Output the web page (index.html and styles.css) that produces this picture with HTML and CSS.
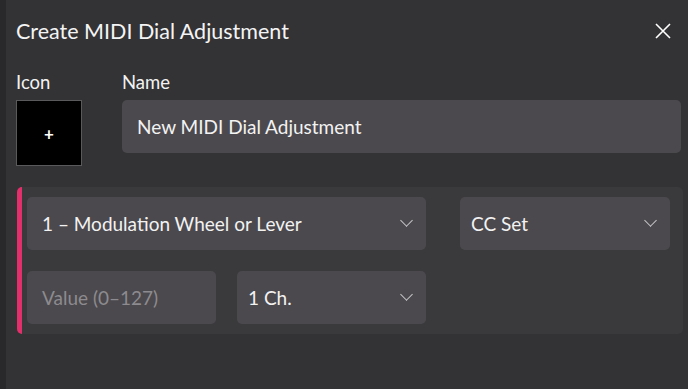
FILE: index.html
```html
<!DOCTYPE html>
<html lang="en">
<head>
    <meta charset="UTF-8">
    <title>Create MIDI Dial Adjustment</title>
    <link rel="stylesheet" href="styles.css">
</head>
<body>
    <div class="dialog">
        <div class="header">
            <h2>Create MIDI Dial Adjustment</h2>
            <button class="close" aria-label="Close">
                <svg width="16" height="16" viewBox="0 0 16 16"><path d="M1 1L15 15M15 1L1 15" stroke="#fff" stroke-width="1.6" fill="none"/></svg>
            </button>
        </div>

        <div class="top-row">
            <div class="field icon-field">
                <label>Icon</label>
                <div class="icon-box">+</div>
            </div>
            <div class="field name-field">
                <label>Name</label>
                <div class="input">New MIDI Dial Adjustment</div>
            </div>
        </div>

        <div class="panel">
            <div class="row">
                <div class="select wide">1 – Modulation Wheel or Lever<span class="chev"></span></div>
                <div class="select type tight">CC Set<span class="chev"></span></div>
            </div>
            <div class="row">
                <div class="input small placeholder">Value (0–127)</div>
                <div class="select small tight">1 Ch.<span class="chev"></span></div>
            </div>
        </div>
    </div>
</body>
</html>
```

FILE: styles.css
```css
body {
    margin: 0;
    background-color: #333235;
    font-family: Lato, 'Noto Sans', sans-serif;
    color: #f2f2f2;
    height: 100vh;
    border-left: 6px solid #29282a;
    box-sizing: border-box;
}

.dialog {
    padding: 0 7px 0 10px;
}

.header {
    display: flex;
    justify-content: space-between;
    align-items: center;
    height: 62px;
}

h2 {
    margin: 0;
    font-size: 21.5px;
    font-weight: normal;
    color: #f4f4f4;
}

.close {
    background: none;
    border: none;
    padding: 0;
    margin-right: 10px;
    display: flex;
}

.top-row {
    display: flex;
    gap: 40px;
}

.field {
    display: flex;
    flex-direction: column;
}

label {
    font-size: 18.5px;
    height: 38px;
    line-height: 40px;
}

.icon-box {
    width: 64px;
    height: 64px;
    background: #000;
    border: 1px solid #5a595c;
    color: #fff;
    display: flex;
    align-items: center;
    justify-content: center;
    font-size: 17px;
    font-weight: bold;
}

.name-field {
    flex: 1;
}

.input,
.select {
    background-color: #4b494d;
    border-radius: 5px;
    height: 53px;
    display: flex;
    align-items: center;
    padding: 0 15px;
    font-size: 19px;
    box-sizing: border-box;
    color: #f2f2f2;
}

.panel {
    margin: 21px 0 0 1px;
    background-color: #3a393c;
    border-left: 5px solid #e3306c;
    border-radius: 5px;
    padding: 10px 13px 10px 5px;
    display: flex;
    flex-direction: column;
    gap: 21px;
    width: 666px;
    box-sizing: border-box;
}

.row {
    display: flex;
    gap: 34px;
}

.select {
    justify-content: space-between;
}

.select.tight {
    padding-left: 11px;
}

.wide {
    width: 399px;
}

.type {
    width: 210px;
}

.small {
    width: 189px;
}

.row .small + .small {
    margin-left: -13px;
}

.placeholder {
    color: #8d8b8f;
}

.chev {
    width: 8px;
    height: 8px;
    border-right: 1.5px solid #c8c7ca;
    border-bottom: 1.5px solid #c8c7ca;
    transform: rotate(45deg);
    margin: -6px 0 0 0;
}
```
